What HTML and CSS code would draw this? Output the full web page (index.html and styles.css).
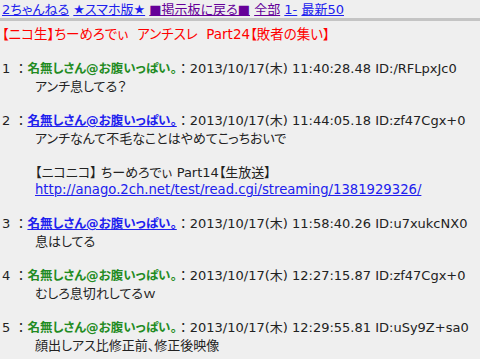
FILE: index.html
```html
<!DOCTYPE html>
<html lang="ja">
<head>
    <meta charset="UTF-8">
    <title>【ニコ生】ちーめろでぃ アンチスレ Part24【敗者の集い】</title>
    <link rel="stylesheet" href="styles.css">
</head>
<body>
    <div class="menu">
        <a href="#">2ちゃんねる</a>
        <a href="#">★スマホ版★</a>
        <a href="#" class="visited">■掲示板に戻る■</a>
        <a href="#" class="visited">全部</a>
        <a href="#">1-</a>
        <a href="#">最新50</a>
    </div>
    <hr class="rule">
    <h1 class="title">【ニコ生】ちーめろでぃ&nbsp; アンチスレ&nbsp; Part24【敗者の集い】</h1>

    <dl class="thread">
        <dt>1 <span class="sep">：</span><b class="name">名無しさん@お腹いっぱい。</b><span class="sep">：</span>2013/10/17(木) 11:40:28.48 ID:/RFLpxJc0</dt>
        <dd>アンチ息してる？</dd>

        <dt>2 <span class="sep">：</span><a href="#" class="name-link">名無しさん@お腹いっぱい。</a><span class="sep">：</span>2013/10/17(木) 11:44:05.18 ID:zf47Cgx+0</dt>
        <dd>アンチなんて不毛なことはやめてこっちおいで<br><br>【ニコニコ】 ちーめろでぃ Part14【生放送】<br><a href="#" class="url">http://anago.2ch.net/test/read.cgi/streaming/1381929326/</a></dd>

        <dt>3 <span class="sep">：</span><a href="#" class="name-link">名無しさん@お腹いっぱい。</a><span class="sep">：</span>2013/10/17(木) 11:58:40.26 ID:u7xukcNX0</dt>
        <dd>息はしてる</dd>

        <dt>4 <span class="sep">：</span><b class="name">名無しさん@お腹いっぱい。</b><span class="sep">：</span>2013/10/17(木) 12:27:15.87 ID:zf47Cgx+0</dt>
        <dd>むしろ息切れしてるｗ</dd>

        <dt>5 <span class="sep">：</span><b class="name">名無しさん@お腹いっぱい。</b><span class="sep">：</span>2013/10/17(木) 12:29:55.81 ID:uSy9Z+sa0</dt>
        <dd>顔出しアス比修正前、修正後映像</dd>
    </dl>
</body>
</html>
```

FILE: styles.css
```css
body {
    margin: 0;
    padding: 0 2px;
    background-color: #efefef;
    color: #222;
    font-family: "DejaVu Sans", "Noto Sans CJK JP", sans-serif;
    font-feature-settings: "palt";
    overflow: hidden;
}
a {
    color: #2020ee;
}
a.visited {
    color: #660099;
}
.menu {
    padding-top: 2px;
    font-size: 13px;
    line-height: 16px;
    white-space: nowrap;
}
.rule {
    margin: 0 -2px;
    height: 3px;
    border: none;
    background-color: #c4c4c4;
}
.title {
    margin: 3px 0 0;
    color: #ff0000;
    font-size: 13.5px;
    font-weight: normal;
    line-height: 20px;
    white-space: nowrap;
}
.thread {
    margin: 16px 0 0;
}
.thread dt {
    font-size: 13px;
    line-height: 18px;
    white-space: nowrap;
}
.sep {
    font-feature-settings: normal;
}
.name,
.name-link {
    font-size: 12.5px;
}
.name {
    color: #228b22;
}
.name-link {
    font-weight: bold;
    color: #2020ee;
}
.thread dd {
    margin: 0 0 17px 33px;
    font-size: 13px;
    line-height: 17px;
    white-space: nowrap;
}
.url {
    font-size: 13.2px;
}
```
